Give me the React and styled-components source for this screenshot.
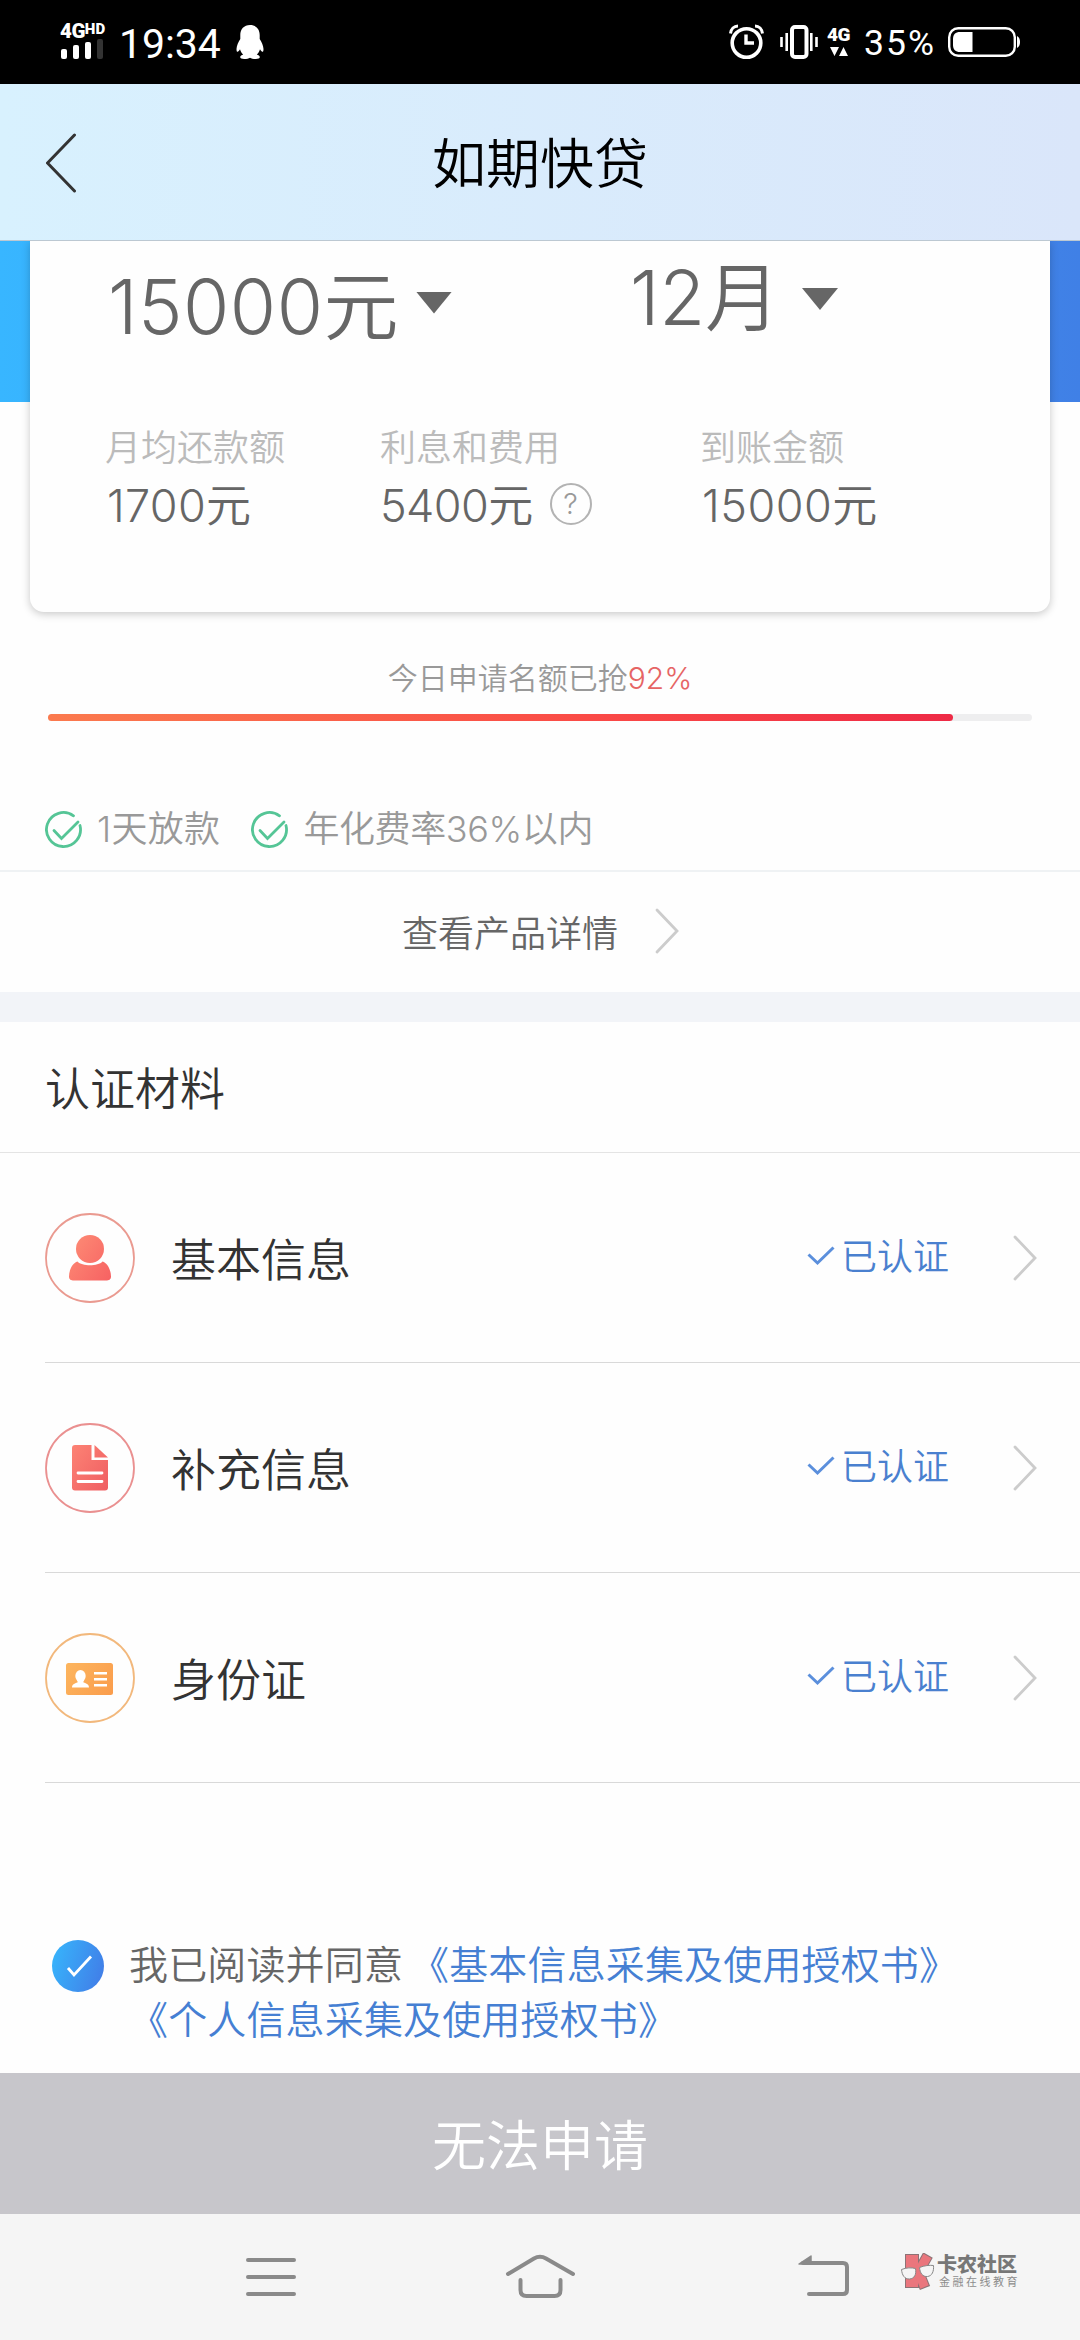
import React from "react";
import styled, { createGlobalStyle } from "styled-components";

const GlobalStyle = createGlobalStyle`
  *, *::before, *::after {
    box-sizing: border-box;
  }

  body {
    margin: 0;
    background: #fefefe;
    font-family: Inter, "Noto Sans CJK SC", sans-serif;
    font-weight: 350;
    color: #333;
  }

  svg {
    display: block;
    flex: none;
  }
`;

const Screen = styled.div`
  width: 1080px;
  height: 2340px;
  display: flex;
  flex-direction: column;
  overflow: hidden;
  white-space: nowrap;
`;

const StatusBar = styled.div`
  flex: none;
  height: 84px;
  padding: 0 60px;
  display: flex;
  align-items: center;
  background: #000;
  color: #fff;
  font-family: Roboto, sans-serif;
`;

const Signal = styled.div`
  width: 46px;
  height: 36px;
  margin-right: 13px;
`;

const SignalLabel = styled.div`
  height: 15px;
  display: flex;
  align-items: flex-start;
  font-size: 20.5px;
  line-height: 15px;
  font-weight: 900;
  letter-spacing: -0.5px;

  sup {
    font-size: 15px;
    line-height: 10px;
    letter-spacing: 0;
  }
`;

const SignalBars = styled.div`
  height: 20px;
  padding-left: 1px;
  display: flex;
  align-items: flex-end;
  gap: 6px;
`;

const SignalBar = styled.span`
  width: 6px;
  height: ${(p) => p.$height}px;
  border-radius: 2px;
  background: ${(p) => (p.$off ? "#333" : "#fff")};
`;

const Clock = styled.div`
  width: 117px;
  padding-top: 4px;
  font-size: 41px;
  line-height: 46px;
  font-weight: 400;
  letter-spacing: -0.1px;
`;

const StatusRight = styled.div`
  margin-left: auto;
  display: flex;
  align-items: center;
`;

const Network = styled.div`
  width: 26px;
  height: 30px;
  margin: 0 11px 0 9px;
  font-size: 19px;
  line-height: 15px;
  font-weight: 900;
  letter-spacing: -0.6px;

  svg {
    margin: 5px 0 0 3px;
  }
`;

const BatteryText = styled.div`
  width: 84px;
  padding-top: 2px;
  font-size: 35.5px;
  line-height: 40px;
  font-weight: 400;
  letter-spacing: 2px;
`;

const Header = styled.header`
  flex: none;
  height: 157px;
  padding: 2px 46px 0;
  display: grid;
  grid-template-columns: 1fr auto 1fr;
  align-items: center;
  border-bottom: 1px solid #bcc8d2;
  background: linear-gradient(90deg, #d8f1fe, #dae6fa);
`;

const Title = styled.h1`
  margin: 4px 0 0;
  font-size: 54px;
  line-height: 60px;
  font-weight: 350;
  color: #000;
`;

const Hero = styled.section`
  flex: none;
  height: 399px;
  padding: 0 30px;
  overflow: hidden;
  background: linear-gradient(90deg, #38b6ff, #4080e6) no-repeat 0 0 / 100% 161px;
`;

const Card = styled.div`
  height: 371px;
  padding: 0 74px 0 75px;
  border-radius: 0 0 14px 14px;
  background: #fefefe;
  box-shadow: 0 2px 8px rgba(0, 0, 0, 0.22);
`;

const Picks = styled.div`
  height: 188px;
  padding-left: 3px;
  display: flex;
  align-items: flex-start;
`;

const Pick = styled.div`
  flex: 0 0 ${(p) => p.$width}px;
  margin-top: ${(p) => p.$top}px;
  display: flex;
  align-items: center;
  font-size: 75px;
  line-height: 90px;
  letter-spacing: ${(p) => p.$spacing}px;
  color: #666;
`;

const PickText = styled.span`
  width: ${(p) => p.$width}px;
`;

const Caret = styled.span`
  width: 36px;
  height: 22px;
  margin-top: ${(p) => p.$top}px;
  background: #666;
  clip-path: polygon(0 0, 100% 0, 50% 100%);
`;

const Figures = styled.div`
  display: grid;
  grid-template-columns: 275px 320px auto;
`;

const Figure = styled.div`
  font-size: 36px;
  line-height: 38px;
  color: #bbb;
`;

const FigureValue = styled.div`
  height: 48px;
  margin-top: 15px;
  padding-left: ${(p) => p.$indent || 0}px;
  display: flex;
  align-items: center;
  gap: 17px;
  font-size: 45px;
  line-height: 48px;
  letter-spacing: ${(p) => p.$spacing}px;
  color: #666;
`;

const HelpDot = styled.span`
  width: 42px;
  height: 42px;
  margin-top: -5px;
  border: 2px solid #b3b3b3;
  border-radius: 50%;
  font-size: 29px;
  line-height: 38px;
  text-align: center;
  letter-spacing: 0;
  color: #999;
`;

const Quota = styled.section`
  flex: none;
  height: 150px;
  padding: 18px 48px 0;
`;

const QuotaText = styled.p`
  margin: 0;
  font-size: 30px;
  line-height: 40px;
  text-align: center;
  color: #999;

  em {
    font-style: normal;
    color: #e66464;
  }
`;

const Track = styled.div`
  height: 7px;
  margin-top: 16px;
  border-radius: 4px;
  background: #eeeeef;
`;

const TrackFill = styled.div`
  height: 100%;
  border-radius: 4px;
  background: linear-gradient(90deg, #fb7a4e, #fa4a46 60%, #ee2a45);
`;

const Perks = styled.section`
  flex: none;
  height: 82px;
  padding: 0 45px 2px;
  display: flex;
  align-items: center;
  border-bottom: 2px solid #eff2f4;
`;

const Perk = styled.div`
  margin-right: 31px;
  display: flex;
  align-items: center;
  gap: 15px;
  font-size: 36px;
  line-height: 40px;
  letter-spacing: ${(p) => p.$spacing}px;
  color: #999;
`;

const Details = styled.a`
  flex: none;
  height: 120px;
  padding: 0 0 2px 402px;
  display: flex;
  align-items: center;
  gap: 37px;
  font-size: 36px;
  color: #666;
`;

const Spacer = styled.div`
  flex: none;
  height: 30px;
  background: #f2f4f8;
`;

const SectionTitle = styled.h2`
  flex: none;
  height: 131px;
  margin: 0;
  padding-left: 45px;
  border-bottom: 1px solid #e4e4e4;
  font-size: 45px;
  line-height: 135px;
  font-weight: 350;
`;

const List = styled.ul`
  flex: none;
  margin: 0;
  padding: 0 0 0 45px;
  list-style: none;
`;

const Item = styled.li`
  height: 210px;
  padding-right: 43px;
  display: flex;
  align-items: center;
  border-bottom: 1px solid #d9d9d9;
  font-size: 45px;
`;

const ItemName = styled.span`
  margin: 0 auto 0 36px;
`;

const Verified = styled.span`
  margin: 0 64px 7px 0;
  display: flex;
  align-items: center;
  gap: 6px;
  font-size: 36px;
  color: #4a80cf;

  svg {
    margin-top: 3px;
  }
`;

const Agreement = styled.section`
  flex: 1;
  padding: 157px 52px 0;
  display: flex;
  align-items: flex-start;
  gap: 25px;
`;

const AgreementText = styled.p`
  margin: -2px 0 0;
  font-size: 39px;
  line-height: 54.6px;
  letter-spacing: 0.15px;
  color: #666;
`;

const DocLink = styled.a`
  margin-left: ${(p) => p.$gap || 0}px;
  color: #457fd3;
`;

const Submit = styled.button`
  flex: none;
  height: 141px;
  padding: 0 0 2px;
  border: 0;
  background: #c7c6cb;
  font: inherit;
  font-size: 54px;
  color: #fff;
`;

const NavBar = styled.nav`
  flex: none;
  height: 126px;
  padding: 39px 0 0 244px;
  display: flex;
  align-items: flex-start;
  background: #f5f5f5;
`;

const NavIcon = styled.div`
  flex: 0 0 ${(p) => p.$width}px;
`;

const BrandText = styled.div`
  padding: 1px 0 0 1px;
  font-size: 20px;
  line-height: 22px;
  font-weight: 900;
  color: #777;
`;

const BrandSub = styled.div`
  padding-left: 3px;
  font-size: 11px;
  line-height: 12px;
  font-weight: 400;
  letter-spacing: 2.5px;
  color: #8c8c8c;
`;

const Penguin = () => (
  <svg width="28" height="34" viewBox="0 0 28 34" fill="#fff">
    <path d="M14 0C8 0 4.300 4.200 4.300 10v4C2.500 17 .6 20.500.5 24c0 2 .4 3 1 2.800.8-.2 1.700-1.400 2.500-2.600.6 2.200 1.700 4 3.200 5.400-1.600.6-3 1.400-3 2.500 0 1.400 1.600 1.900 4 1.900 2.600 0 4.600-.4 5.800-1.300 1.200.9 3.200 1.300 5.800 1.300 2.400 0 4-.5 4-1.900 0-1.100-1.400-1.900-3-2.500 1.500-1.400 2.600-3.200 3.200-5.400.8 1.200 1.700 2.400 2.500 2.600.6.200 1-.8 1-2.800-.1-3.500-2-7-3.800-10v-4C23.700 4.200 20 0 14 0z" />
  </svg>
);

const Alarm = () => (
  <svg width="35" height="36" viewBox="0 0 35 36" fill="none" stroke="#fff">
    <circle cx="17.500" cy="19" r="14.300" strokeWidth="3.600" />
    <path d="M17 10.500V19h8" strokeWidth="3.400" />
    <path d="M1.500 9.500C2 5 5 2 9 2M33.500 9.500C33 5 30 2 26 2" strokeWidth="3" />
  </svg>
);

const Vibrate = () => (
  <svg width="38" height="34" viewBox="0 0 38 34" fill="none" stroke="#fff">
    <rect x="12" y="2" width="14.500" height="30" rx="3" strokeWidth="4" />
    <path d="M1.500 12v10M36.500 12v10M6.700 8v18M31.300 8v18" strokeWidth="2.600" />
  </svg>
);

const DataArrows = () => (
  <svg width="18" height="9" viewBox="0 0 18 9" fill="#fff">
    <path d="M0 0h9L4.500 9zM9 9h9L13.500 0z" />
  </svg>
);

const Battery = () => (
  <svg width="72" height="30" viewBox="0 0 72 30">
    <rect x="1.200" y="1.200" width="65.600" height="27.600" rx="9" fill="none" stroke="#fff" strokeWidth="2.400" />
    <path d="M24.500 5v20H12c-4.500 0-7-2.500-7-7v-6c0-4.500 2.500-7 7-7z" fill="#fff" />
    <path d="M69 9c2 1 3 3 3 6s-1 5-3 6z" fill="#fff" />
  </svg>
);

const BackArrow = () => (
  <svg width="31" height="60" viewBox="0 0 31 60" fill="none" stroke="#333" strokeWidth="3" strokeLinecap="round" strokeLinejoin="round">
    <path d="M28.500 2L1.500 30l27 28" />
  </svg>
);

const ChevronRight = () => (
  <svg width="24" height="46" viewBox="0 0 24 46" fill="none" stroke="#ccc" strokeWidth="2.800" strokeLinecap="round">
    <path d="M2 2l20 21L2 44" />
  </svg>
);

const GreenCheck = () => (
  <svg width="37" height="37" viewBox="0 0 37 37" fill="none" stroke="#55c596" strokeWidth="2.800" strokeLinecap="round">
    <path d="M28.500 4.800A17 17 0 1 0 35 14.500" />
    <path d="M9 19.500l7.500 8L33 11" />
  </svg>
);

const BlueTick = () => (
  <svg width="28" height="20" viewBox="0 0 28 20" fill="none" stroke="#5b8fdc" strokeWidth="3">
    <path d="M1.500 8.500l9 8.500L26.500 1.500" />
  </svg>
);

const AgreeTick = () => (
  <svg width="52" height="52" viewBox="0 0 52 52" fill="none">
    <linearGradient id="agree" x1="0" x2="1" y1="0.3" y2="0.6">
      <stop stopColor="#37b3fb" />
      <stop offset="1" stopColor="#417fe8" />
    </linearGradient>
    <circle cx="26" cy="26" r="26" fill="url(#agree)" />
    <path d="M16 28l6 7 17-18.500" stroke="#fff" strokeWidth="2.800" />
  </svg>
);

const ItemIcon = ({ id, from, to, ring, children }) => (
  <svg width="90" height="90" viewBox="0 0 90 90">
    <linearGradient id={id} x1="15" y1="20" x2="75" y2="60" gradientUnits="userSpaceOnUse">
      <stop stopColor={from} />
      <stop offset="1" stopColor={to} />
    </linearGradient>
    <circle cx="45" cy="45" r="44" fill="none" stroke={ring} strokeWidth="1.800" />
    <g fill={`url(#${id})`}>{children}</g>
  </svg>
);

const items = [
  {
    name: "基本信息",
    icon: (
      <ItemIcon id="person" from="#ff9479" to="#f65f61" ring="#ea9a90">
        <circle cx="45" cy="36" r="14" />
        <path d="M32.500 48.500C37 53.500 53 53.500 57.500 48.500 62.500 50 66 57 66 63.500c0 3-2 4-5 4H29c-3 0-5-1-5-4 0-6.500 3.500-13.500 8.500-15z" />
      </ItemIcon>
    ),
  },
  {
    name: "补充信息",
    icon: (
      <ItemIcon id="doc" from="#ff8a78" to="#ee5a60" ring="#ea9090">
        <path d="M30 22h16.500v15H63v27.500c0 2-1 3-3 3H30c-2 0-3-1-3-3V25c0-2 1-3 3-3z" />
        <path d="M49.500 22L63 34.500H49.500z" />
        <path d="M33 50h24M33 58.500h24" stroke="#fff" strokeWidth="2.800" strokeLinecap="round" />
      </ItemIcon>
    ),
  },
  {
    name: "身份证",
    icon: (
      <ItemIcon id="idcard" from="#fdba62" to="#fa9a4a" ring="#f2b87c">
        <rect x="21" y="30" width="47" height="32" rx="2.500" />
        <g fill="#fff">
          <ellipse cx="35.500" cy="43" rx="5.200" ry="6" />
          <path d="M32.500 47h6v2.500c3 .8 5.500 2 5.500 5H27c0-3 2.500-4.200 5.500-5z" />
          <rect x="49" y="39" width="13" height="2.500" />
          <rect x="49" y="45" width="13" height="2.500" />
          <rect x="49" y="51" width="13" height="2.500" />
        </g>
      </ItemIcon>
    ),
  },
];

const MenuIcon = () => (
  <svg width="54" height="48" viewBox="0 0 54 48" stroke="#8a8a8a" strokeWidth="4" strokeLinecap="round">
    <path d="M4 7h46M4 24h46M4 41h46" />
  </svg>
);

const HomeIcon = () => (
  <svg width="76" height="48" viewBox="0 0 76 48" fill="none" stroke="#8a8a8a" strokeWidth="4" strokeLinecap="round">
    <path d="M6 21L32 5.500q6-3.500 12 0L71 21" />
    <path d="M18.500 27v10q0 6 6 6h28q6 0 6-6V27" />
  </svg>
);

const ReturnIcon = () => (
  <svg width="56" height="48" viewBox="0 0 56 48" fill="none" stroke="#8a8a8a" strokeWidth="4" strokeLinecap="round">
    <path d="M6 10h40q4 0 4 4v23q0 4-4 4H12" />
    <path d="M2 11L14 3v8z" fill="#8a8a8a" strokeWidth="1.500" strokeLinejoin="round" />
  </svg>
);

const BrandLogo = () => (
  <svg width="36" height="38" viewBox="0 0 36 38">
    <g stroke="#8d7376">
      <path d="M12 1v34" strokeWidth="14" />
      <path d="M28 2L15 25" strokeWidth="11" />
      <path d="M17 15l8 20" strokeWidth="11" />
    </g>
    <g stroke="#ea767d">
      <path d="M12 2v32" strokeWidth="12" />
      <path d="M27.500 3L15 25" strokeWidth="9" />
      <path d="M17 15l7.500 19" strokeWidth="9" />
    </g>
    <g fill="#f5f5f5" stroke="#888" strokeWidth="1">
      <path d="M1.500 16.500c5-2 10-2 14-1 1 6-1 10-6 10.500-5 .3-7.500-4-8-9.500z" />
      <path d="M19.500 14.500c5-2 10-2.500 14-2 .5 6-1.500 10.500-6 11-5 .5-7.500-3.500-8-9z" />
    </g>
  </svg>
);

const quota = 92;

const App = () => (
  <>
    <GlobalStyle />
    <Screen>
      <StatusBar>
        <Signal>
          <SignalLabel>
            4G<sup>HD</sup>
          </SignalLabel>
          <SignalBars>
            <SignalBar $height={10} />
            <SignalBar $height={14} />
            <SignalBar $height={17} />
            <SignalBar $height={20} $off />
          </SignalBars>
        </Signal>
        <Clock>19:34</Clock>
        <Penguin />
        <StatusRight>
          <Alarm />
          <span>&emsp;</span>
          <Vibrate />
          <Network>
            4G
            <DataArrows />
          </Network>
          <BatteryText>35%</BatteryText>
          <Battery />
        </StatusRight>
      </StatusBar>

      <Header>
        <BackArrow />
        <Title>如期快贷</Title>
      </Header>

      <Hero>
        <Card>
          <Picks>
            <Pick $width={522} $top={21} $spacing={0.5}>
              <PickText $width={308}>15000元</PickText>
              <Caret $top={-9} />
            </Pick>
            <Pick $width={300} $top={12} $spacing={-0.3}>
              <PickText $width={172}>12月</PickText>
              <Caret $top={2} />
            </Pick>
          </Picks>
          <Figures>
            <Figure>
              月均还款额
              <FigureValue $indent={2} $spacing={0.3}>
                1700元
              </FigureValue>
            </Figure>
            <Figure>
              利息和费用
              <FigureValue $spacing={-0.6}>
                5400元
                <HelpDot>?</HelpDot>
              </FigureValue>
            </Figure>
            <Figure>
              到账金额
              <FigureValue $indent={2} $spacing={0.5}>
                15000元
              </FigureValue>
            </Figure>
          </Figures>
        </Card>
      </Hero>

      <Quota>
        <QuotaText>
          今日申请名额已抢<em>{quota}%</em>
        </QuotaText>
        <Track>
          <TrackFill style={{ width: `${quota}%` }} />
        </Track>
      </Quota>

      <Perks>
        <Perk $spacing={0.3}>
          <GreenCheck />
          1天放款
        </Perk>
        <Perk $spacing={-0.4}>
          <GreenCheck />
          年化费率36%以内
        </Perk>
      </Perks>

      <Details>
        查看产品详情
        <ChevronRight />
      </Details>

      <Spacer />

      <SectionTitle>认证材料</SectionTitle>
      <List>
        {items.map((item) => (
          <Item key={item.name}>
            {item.icon}
            <ItemName>{item.name}</ItemName>
            <Verified>
              <BlueTick />
              已认证
            </Verified>
            <ChevronRight />
          </Item>
        ))}
      </List>

      <Agreement>
        <AgreeTick />
        <AgreementText>
          我已阅读并同意
          <DocLink $gap={7}>《基本信息采集及使用授权书》</DocLink>
          <br />
          <DocLink>《个人信息采集及使用授权书》</DocLink>
        </AgreementText>
      </Agreement>

      <Submit>无法申请</Submit>

      <NavBar>
        <NavIcon $width={258}>
          <MenuIcon />
        </NavIcon>
        <NavIcon $width={295}>
          <HomeIcon />
        </NavIcon>
        <NavIcon $width={103}>
          <ReturnIcon />
        </NavIcon>
        <BrandLogo />
        <div>
          <BrandText>卡农社区</BrandText>
          <BrandSub>金融在线教育</BrandSub>
        </div>
      </NavBar>
    </Screen>
  </>
);

export default App;
